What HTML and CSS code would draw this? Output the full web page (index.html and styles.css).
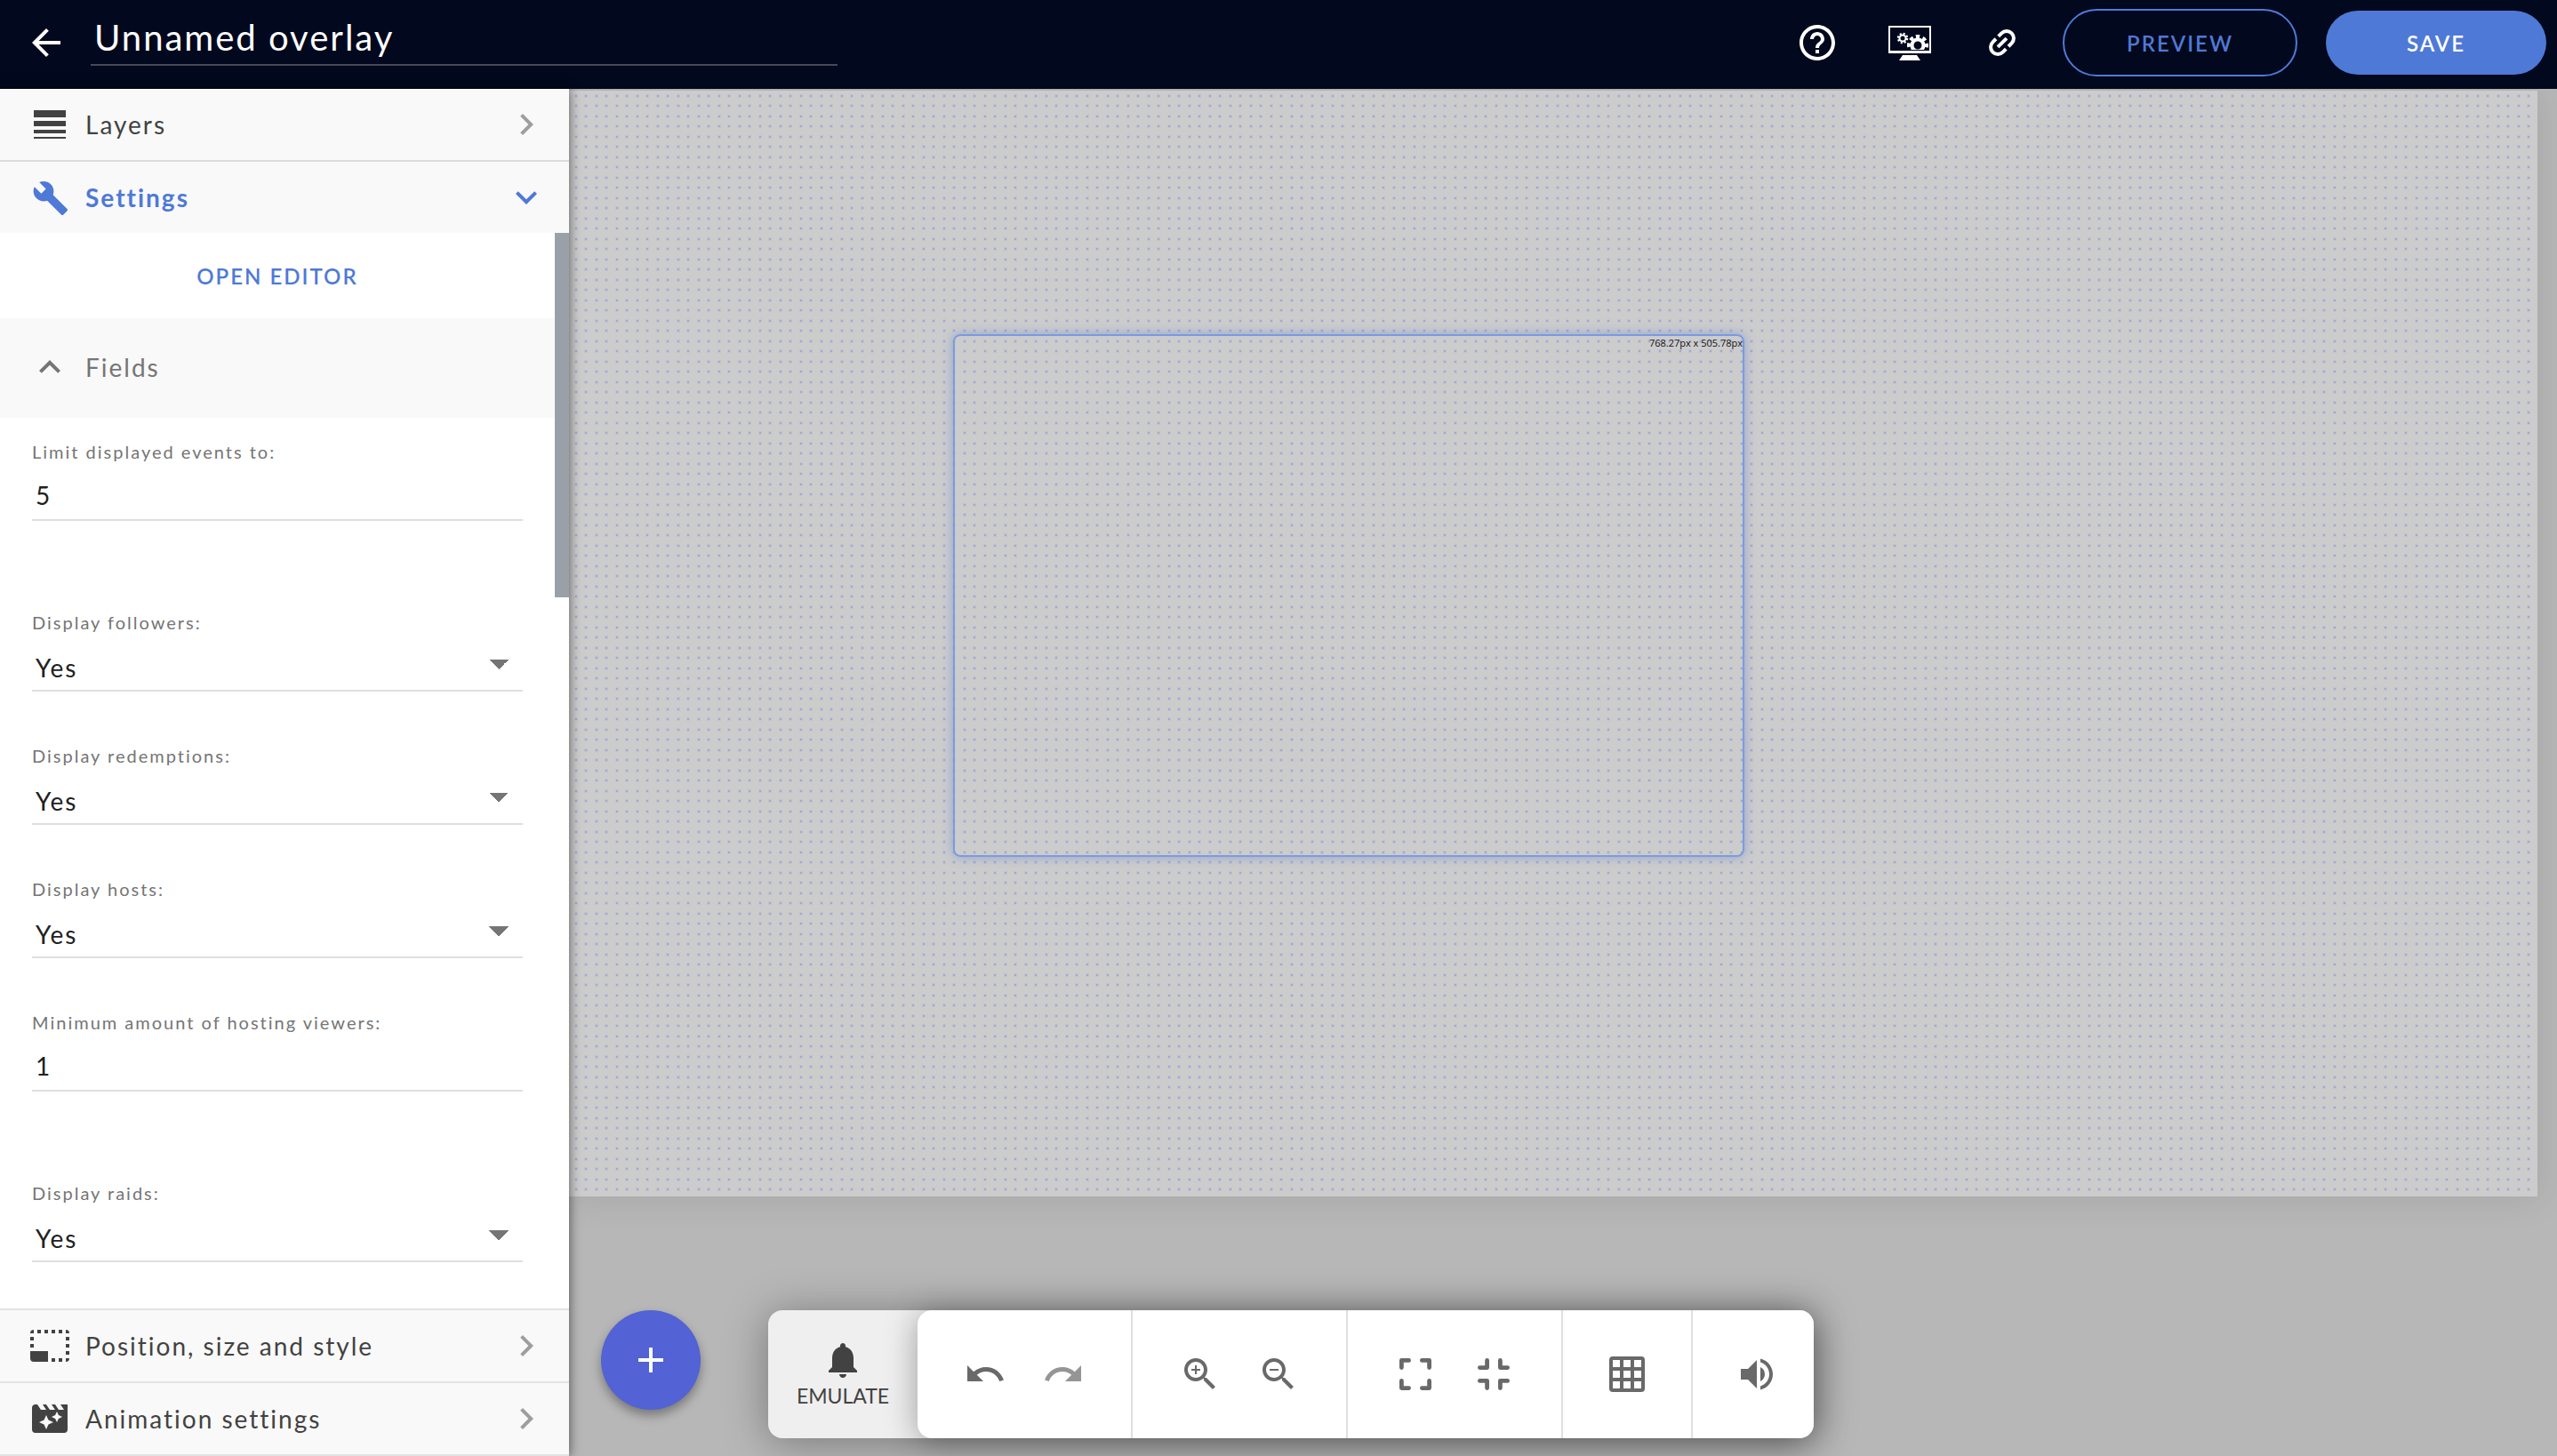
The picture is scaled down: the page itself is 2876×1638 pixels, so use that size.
FILE: index.html
```html
<!DOCTYPE html>
<html lang="en">
<head>
<meta charset="utf-8">
<title>Unnamed overlay</title>
<link rel="stylesheet" href="styles.css">
</head>
<body>
<div class="app">
  <header class="topbar">
    <button class="icon-btn back" aria-label="Back"><svg class="icon" viewBox="0 0 24 24"><path d="M20 11H7.83l5.59-5.59L12 4l-8 8 8 8 1.41-1.41L7.83 13H20v-2z"/></svg></button>
    <input class="title" type="text" value="Unnamed overlay" aria-label="Overlay name">
    <div class="actions">
      <button class="icon-btn" aria-label="Help"><svg class="icon" viewBox="0 0 24 24"><path d="M11 18h2v-2h-2v2zm1-16C6.48 2 2 6.48 2 12s4.48 10 10 10 10-4.48 10-10S17.52 2 12 2zm0 18c-4.41 0-8-3.59-8-8s3.59-8 8-8 8 3.59 8 8-3.59 8-8 8zm0-14c-2.21 0-4 1.79-4 4h2c0-1.1.9-2 2-2s2 .9 2 2c0 2-3 1.75-3 5h2c0-2.25 3-2.5 3-5 0-2.21-1.79-4-4-4z"/></svg></button>
      <button class="icon-btn" aria-label="Display settings"><svg class="icon" viewBox="0 0 48 48"><clipPath id="screen"><path d="M2 7h44v25H2z"/></clipPath><path fill-rule="evenodd" d="M0 5h48v31H0zM2 7v26h44V7z"/><path d="M16 38h16l4 6H12z"/><g clip-path="url(#screen)" fill="none" stroke="currentColor"><circle cx="16" cy="19" r="3.500" stroke-width="2"/><circle cx="16" cy="19" r="5" stroke-width="2.500" stroke-dasharray="2 1.927"/><circle cx="33" cy="27" r="6.500" stroke-width="4"/><circle cx="33" cy="27" r="10" stroke-width="4" stroke-dasharray="4.200 3.654" transform="rotate(-102 33 27)"/></g></svg></button>
      <button class="icon-btn" aria-label="Copy link"><svg class="icon" viewBox="0 0 48 48"><g transform="rotate(-45 24 24)" fill="none" stroke="currentColor" stroke-width="4"><path d="M22 16h-5a8 8 0 0 0 0 16h5M26 16h5a8 8 0 0 1 0 16h-5M17 24h14"/></g></svg></button>
      <button class="btn btn-outline">PREVIEW</button>
      <button class="btn btn-solid">SAVE</button>
    </div>
  </header>

  <div class="main">
    <aside class="sidebar">
      <button class="section">
        <svg class="icon lead" viewBox="0 0 48 48"><path d="M6 8h36v8H6zM6 20h36v6H6zM6 30h36v4H6zM6 38h36v2H6z"/></svg>
        <span class="section-name">Layers</span>
        <svg class="icon arrow" viewBox="0 0 24 24"><path d="M8.590 16.590 13.170 12 8.590 7.410 10 6l6 6-6 6z"/></svg>
      </button>
      <button class="section section-open">
        <svg class="icon lead" viewBox="0 0 24 24"><path transform="translate(2 2) scale(.87)" d="M22.700 19l-9.100-9.100c.9-2.300.4-5-1.500-6.900-2-2-5-2.400-7.400-1.300L9 6 6 9 1.600 4.700C.4 7.100.9 10.100 2.900 12.100c1.900 1.900 4.600 2.400 6.900 1.500l9.100 9.100c.4.400 1 .4 1.400 0l2.300-2.300c.5-.4.5-1.100.1-1.400z"/></svg>
        <span class="section-name">Settings</span>
        <svg class="icon arrow" viewBox="0 0 24 24"><path d="M7.410 8.590 12 13.170l4.590-4.580L18 10l-6 6-6-6z"/></svg>
      </button>

      <div class="panel">
        <div class="editor-row"><button class="link-btn">OPEN EDITOR</button></div>
        <button class="group">
          <svg class="icon lead" viewBox="0 0 24 24"><path d="M7.410 15.410 12 10.830l4.590 4.580L18 14l-6-6-6 6z"/></svg>
          <span>Fields</span>
        </button>
        <div class="fields">
          <div class="field field-text"><label for="limit">Limit displayed events to:</label><input id="limit" type="text" value="5"></div>
          <div class="field"><label for="followers">Display followers:</label><select id="followers"><option>Yes</option><option>No</option></select></div>
          <div class="field"><label for="redemptions">Display redemptions:</label><select id="redemptions"><option>Yes</option><option>No</option></select></div>
          <div class="field"><label for="hosts">Display hosts:</label><select id="hosts"><option>Yes</option><option>No</option></select></div>
          <div class="field field-text"><label for="minimum">Minimum amount of hosting viewers:</label><input id="minimum" type="text" value="1"></div>
          <div class="field"><label for="raids">Display raids:</label><select id="raids"><option>Yes</option><option>No</option></select></div>
        </div>
        <div class="scroll-thumb"></div>
      </div>

      <div class="bottom-sections">
        <button class="section">
          <svg class="icon lead" viewBox="0 0 48 48"><path d="M2 30h20v12H6a4 4 0 0 1-4-4zM2 10a4 4 0 0 1 4-4v4zM10 6h4v4h-4zM18 6h4v4h-4zM26 6h4v4h-4zM34 6h4v4h-4zM42 6a4 4 0 0 1 4 4h-4zM2 14h4v4H2zM2 22h4v4H2zM42 14h4v4h-4zM42 22h4v4h-4zM42 30h4v4h-4zM26 38h4v4h-4zM34 38h4v4h-4zM42 38h4a4 4 0 0 1-4 4z"/></svg>
          <span class="section-name">Position, size and style</span>
          <svg class="icon arrow" viewBox="0 0 24 24"><path d="M8.590 16.590 13.170 12 8.590 7.410 10 6l6 6-6 6z"/></svg>
        </button>
        <button class="section">
          <svg class="icon lead" viewBox="0 0 24 24"><path fill-rule="evenodd" d="M18 4l2 3h-3l-2-3h-2l2 3h-3l-2-3H8l2 3H7L5 4H4a2 2 0 0 0-2 2v12a2 2 0 0 0 2 2h16a2 2 0 0 0 2-2V4zM11.250 15.250 10 18l-1.250-2.750L6 14l2.750-1.250L10 10l1.250 2.750L14 14zM16.940 11.940 16 14l-.94-2.060L13 11l2.060-.94L16 8l.94 2.060L19 11z"/></svg>
          <span class="section-name">Animation settings</span>
          <svg class="icon arrow" viewBox="0 0 24 24"><path d="M8.590 16.590 13.170 12 8.590 7.410 10 6l6 6-6 6z"/></svg>
        </button>
      </div>
    </aside>

    <main class="workspace">
      <div class="sheet">
        <svg class="dots" aria-hidden="true">
          <pattern id="dots" width="23" height="23" patternUnits="userSpaceOnUse">
            <path fill="#c2c4ce" d="M6 4h4v4H6zM17 4h4v4h-4zM6 15h4v4H6zM17 15h4v4h-4z"/>
            <path fill="#a1a8d3" d="M7 5h2v2H7zM18 5h2v2h-2zM7 16h2v2H7zM18 16h2v2h-2z"/>
          </pattern>
          <rect width="100%" height="100%" fill="url(#dots)"/>
        </svg>
      </div>
      <div class="widget"><span class="widget-size">768.27px x 505.78px</span></div>
      <div class="dock">
        <button class="fab" aria-label="Add widget"><svg viewBox="0 0 28 28"><path d="M12 0h4v12h12v4H16v12h-4V16H0v-4h12z"/></svg></button>
        <div class="toolbar">
          <button class="emulate"><svg class="icon" viewBox="0 0 24 24"><path d="M12 22c1.100 0 2-.9 2-2h-4c0 1.100.89 2 2 2zm6-6v-5c0-3.070-1.640-5.640-4.500-6.320V4c0-.83-.67-1.500-1.500-1.500s-1.500.67-1.500 1.500v.68C7.630 5.360 6 7.920 6 11v5l-2 2v1h16v-1z"/></svg><span>EMULATE</span></button>
          <div class="tools">
            <div class="cell">
              <button class="tool" aria-label="Undo"><svg class="icon" viewBox="0 0 24 24"><path d="M12.500 8c-2.650 0-5.050.99-6.900 2.600L2 7v9h9l-3.620-3.620c1.390-1.160 3.160-1.880 5.120-1.880 3.540 0 6.550 2.310 7.600 5.500l2.370-.78C21.080 11.030 17.150 8 12.500 8z"/></svg></button>
              <button class="tool tool-dim" aria-label="Redo"><svg class="icon" viewBox="0 0 24 24"><path d="M18.400 10.600C16.550 8.990 14.150 8 11.500 8c-4.650 0-8.580 3.030-9.960 7.220L3.900 16c1.050-3.190 4.050-5.500 7.600-5.500 1.950 0 3.730.72 5.120 1.880L13 16h9V7z"/></svg></button>
            </div>
            <div class="cell">
              <button class="tool" aria-label="Zoom in"><svg class="icon" viewBox="0 0 24 24"><path d="M15.500 14h-.79l-.28-.27C15.410 12.590 16 11.110 16 9.500 16 5.910 13.090 3 9.500 3S3 5.910 3 9.500 5.910 16 9.500 16c1.610 0 3.090-.59 4.230-1.570l.27.28v.79l5 4.990L20.490 19zm-6 0C7.010 14 5 11.990 5 9.500S7.010 5 9.500 5 14 7.010 14 9.500 11.990 14 9.500 14zM12 10h-2v2H9v-2H7V9h2V7h1v2h2z"/></svg></button>
              <button class="tool" aria-label="Zoom out"><svg class="icon" viewBox="0 0 24 24"><path d="M15.500 14h-.79l-.28-.27C15.410 12.590 16 11.110 16 9.500 16 5.910 13.090 3 9.500 3S3 5.910 3 9.500 5.910 16 9.500 16c1.610 0 3.090-.59 4.230-1.570l.27.28v.79l5 4.990L20.490 19zm-6 0C7.010 14 5 11.990 5 9.500S7.010 5 9.500 5 14 7.010 14 9.500 11.990 14 9.500 14zM7 9h5v1H7z"/></svg></button>
            </div>
            <div class="cell">
              <button class="tool" aria-label="Fit to screen"><svg class="icon line" viewBox="0 0 24 24"><path d="M4.200 8.300V4.200h4.100M15.700 4.200h4.100v4.100M4.200 15.700v4.100h4.100M15.700 19.800h4.100v-4.100"/></svg></button>
              <button class="tool" aria-label="Actual size"><svg class="icon line" viewBox="0 0 24 24"><path d="M8.300 4.200v4.100H4.200M15.700 4.200v4.100h4.100M8.300 19.800v-4.100H4.200M15.700 19.800v-4.100h4.100"/></svg></button>
            </div>
            <div class="cell cell-single">
              <button class="tool" aria-label="Toggle grid"><svg class="icon" viewBox="0 0 24 24"><path fill-rule="evenodd" d="M4 2h16a2 2 0 0 1 2 2v16a2 2 0 0 1-2 2H4a2 2 0 0 1-2-2V4a2 2 0 0 1 2-2zM4 4v4h4V4zM10 4v4h4V4zM16 4v4h4V4zM4 10v4h4v-4zM10 10v4h4v-4zM16 10v4h4v-4zM4 16v4h4v-4zM10 16v4h4v-4zM16 16v4h4v-4z"/></svg></button>
            </div>
            <div class="cell cell-last">
              <button class="tool" aria-label="Volume"><svg class="icon" viewBox="0 0 24 24"><path d="M3 9v6h4l5 5V4L7 9zM16.500 12A4.500 4.500 0 0 0 14 7.970v8.050c1.480-.73 2.500-2.250 2.500-4.020zM14 3.230v2.060c2.890.86 5 3.540 5 6.710s-2.110 5.850-5 6.710v2.060c4.010-.91 7-4.490 7-8.770s-2.990-7.860-7-8.770z"/></svg></button>
            </div>
          </div>
        </div>
      </div>
    </main>
  </div>
</div>
</body>
</html>
```
FILE: styles.css
```css
* { box-sizing: border-box; }

body {
  margin: 0;
  font-family: Lato, "Open Sans", sans-serif;
  font-size: 28px;
  letter-spacing: 2px;
  color: #424242;
}

button, input, select {
  margin: 0;
  padding: 0;
  border: 0;
  border-radius: 0;
  background: none;
  font: inherit;
  letter-spacing: inherit;
  color: inherit;
}

.app { display: flex; flex-direction: column; height: 100vh; }

.icon { display: block; flex: none; width: 48px; height: 48px; fill: currentColor; }

/* Top bar */
.topbar {
  display: flex;
  flex: none;
  align-items: center;
  height: 100px;
  padding: 0 12px 4px 28px;
  background: #02081d;
  color: #fff;
}
.back { margin-right: 26px; }
.title {
  width: 840px;
  height: 74px;
  padding: 12px 4px 0;
  align-self: flex-start;
  border-bottom: 2px solid #464a5a;
  font-size: 40px;
}
.actions { display: flex; align-items: center; gap: 56px; margin-left: auto; }
.btn { height: 76px; border-radius: 38px; font-size: 24px; font-weight: 600; }
.btn-outline { width: 264px; margin-left: -12px; border: 2px solid #4f79d6; color: #4f79d6; }
.btn-solid { width: 248px; height: 72px; margin-left: -24px; background: #4f79d6; }

.main { display: flex; flex: 1; min-height: 0; }

/* Sidebar */
.sidebar {
  position: relative;
  z-index: 1;
  display: flex;
  flex: none;
  flex-direction: column;
  width: 640px;
  background: #fff;
  box-shadow: 0 0 12px rgba(0, 0, 0, .6);
}
.section {
  display: flex;
  flex: none;
  align-items: center;
  gap: 16px;
  width: 100%;
  height: 82px;
  padding: 0 24px 0 32px;
  border-bottom: 2px solid #dcdcdc;
  background: #f9f9f9;
  text-align: left;
}
.section-name { flex: 1; }
.arrow { color: #9e9e9e; }
.section-open { height: 80px; border-bottom: 0; color: #4f79d6; font-weight: 700; }
.section-open .arrow { color: inherit; }
.bottom-sections { border-top: 2px solid #e3e3e3; }
.bottom-sections .section { border-color: #e3e3e3; }

.panel { position: relative; flex: 1; min-height: 0; overflow: hidden; padding-right: 16px; }
.editor-row { display: flex; align-items: center; justify-content: center; height: 96px; }
.link-btn { color: #4f79d6; font-size: 24px; font-weight: 600; }
.group {
  display: flex;
  align-items: center;
  gap: 16px;
  width: 100%;
  height: 112px;
  padding: 0 32px 2px;
  background: #f9f9f9;
  color: #757575;
}
.fields { display: flex; flex-direction: column; gap: 58px; padding: 24px 36px; }
.field { display: flex; flex-direction: column; width: 552px; }
.field label { height: 28px; font-size: 20px; line-height: 28px; color: #757575; }
.field input, .field select {
  width: 100%;
  height: 64px;
  padding: 12px 4px 0;
  border-bottom: 2px solid #dfdfdf;
  color: #212121;
}
.field input { padding-top: 8px; }
.field-text { margin-bottom: 42px; }
.field select {
  appearance: none;
  background: conic-gradient(from -45deg at 50% 100%, #757575 90deg, transparent 0) no-repeat right 16px top 28px / 22px 11px;
}
.scroll-thumb { position: absolute; top: 0; right: 0; width: 16px; height: 410px; background: #9aa0a8; }

/* Workspace */
.workspace { position: relative; flex: 1; min-width: 0; overflow: hidden; background: #b7b7b7; }
.sheet {
  height: 1246px;
  margin-right: 22px;
  border-top: 2px solid #b2b2b2;
  background: #ccc;
  box-shadow: 0 0 40px rgba(0, 0, 0, .1);
}
.dots { display: block; width: 100%; height: 100%; }
.widget {
  position: absolute;
  top: 276px;
  left: 432px;
  width: 890px;
  height: 588px;
  border: 2px solid #7c9bdf;
  border-radius: 8px;
  box-shadow: 0 0 12px rgba(79, 121, 214, .5);
  text-align: right;
}
.widget-size {
  display: block;
  font: 11px/16px "Open Sans", sans-serif;
  letter-spacing: normal;
  color: #111;
}

/* Dock */
.dock {
  position: absolute;
  bottom: 20px;
  left: 36px;
  display: flex;
  align-items: flex-start;
  gap: 76px;
}
.fab {
  display: grid;
  place-items: center;
  width: 112px;
  height: 112px;
  border-radius: 50%;
  background: #5362d4;
  box-shadow: 0 6px 12px rgba(0, 0, 0, .35);
}
.fab svg { width: 28px; height: 28px; fill: #fff; }
.toolbar {
  position: relative;
  display: flex;
  height: 144px;
  border-radius: 16px;
  background: #efefef;
  box-shadow: 0 4px 48px rgba(0, 0, 0, .35);
}
/* Shadow of the tab tucked behind the toolbar */
.toolbar::before {
  content: "";
  position: absolute;
  z-index: -1;
  top: 4px;
  left: 600px;
  width: 100px;
  height: 40px;
  box-shadow: 0 0 12px rgba(0, 0, 0, .35);
}
.emulate {
  display: flex;
  flex-direction: column;
  align-items: center;
  justify-content: center;
  width: 168px;
  font-size: 23px;
  line-height: 32px;
  letter-spacing: normal;
  color: #424242;
}
.tools {
  display: flex;
  border-radius: 16px;
  background: #fff;
  box-shadow: 0 4px 36px rgba(0, 0, 0, .35);
}
.cell {
  display: flex;
  align-items: center;
  justify-content: center;
  gap: 40px;
  width: 242px;
  border-right: 2px solid #dfdfdf;
  color: #696969;
}
.cell-single { width: 146px; }
.cell-last { width: 136px; padding-left: 8px; border-right: 0; }
.tool-dim { opacity: .7; }
.line { fill: none; stroke: currentColor; stroke-width: 2.4; stroke-linecap: round; stroke-linejoin: round; }
```
